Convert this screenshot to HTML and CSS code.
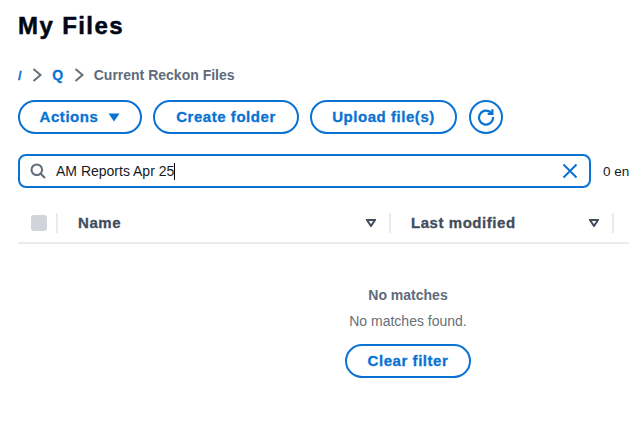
FILE: index.html
```html
<!DOCTYPE html>
<html lang="en">
<head>
    <meta charset="UTF-8">
    <title>My Files</title>
    <link rel="stylesheet" href="styles.css">
</head>
<body>
    <h1 class="page-title">My Files</h1>

    <!-- Breadcrumbs -->
    <nav class="breadcrumbs">
        <a class="crumb-link crumb-root">/</a>
        <svg class="crumb-arrow" viewBox="0 0 12 16"><path d="M2.5 2 L9.5 8 L2.5 14"/></svg>
        <a class="crumb-link">Q</a>
        <svg class="crumb-arrow" viewBox="0 0 12 16"><path d="M2.5 2 L9.5 8 L2.5 14"/></svg>
        <span class="crumb-current">Current Reckon Files</span>
    </nav>

    <!-- Toolbar -->
    <div class="toolbar">
        <button class="button button-actions">Actions
            <svg class="caret" viewBox="0 0 12 9"><path d="M0.5 0.5 H11.5 L6 8.5 Z"/></svg>
        </button>
        <button class="button button-create">Create folder</button>
        <button class="button button-upload">Upload file(s)</button>
        <button class="button-round" aria-label="Refresh">
            <svg viewBox="0 0 18 18"><path d="M14.6 5.4 A7 7 0 1 0 16 9"/><path d="M15.4 1.2 V5.9 H10.7"/></svg>
        </button>
    </div>

    <!-- Filter -->
    <div class="filter-row">
        <div class="filter-box">
            <svg class="search-icon" viewBox="0 0 16 16"><circle cx="6.8" cy="6.8" r="5.3"/><path d="M10.7 10.7 L15 15"/></svg>
            <span class="filter-text">AM Reports Apr 25</span><span class="text-cursor"></span>
            <svg class="clear-icon" viewBox="0 0 16 16"><path d="M1.5 1.5 L14.5 14.5 M14.5 1.5 L1.5 14.5"/></svg>
        </div>
        <span class="match-count">0 en</span>
    </div>

    <!-- Table header -->
    <div class="table-header">
        <div class="col-check"><span class="checkbox"></span></div>
        <div class="col col-name">
            <span>Name</span>
            <svg class="sort-icon" viewBox="0 0 10 8"><path d="M1 1 H9 L5 7 Z"/></svg>
        </div>
        <div class="col col-modified">
            <span>Last modified</span>
            <svg class="sort-icon" viewBox="0 0 10 8"><path d="M1 1 H9 L5 7 Z"/></svg>
        </div>
    </div>

    <!-- Empty state -->
    <div class="empty-state">
        <div class="empty-title">No matches</div>
        <div class="empty-text">No matches found.</div>
        <button class="button button-clear">Clear filter</button>
    </div>
</body>
</html>
```

FILE: styles.css
```css
/* General Reset and Basic Styles */
* {
    margin: 0;
    padding: 0;
    box-sizing: border-box;
}

html, body {
    overflow: hidden;
}

body {
    font-family: "Liberation Sans", Arial, sans-serif;
    background-color: #fff;
    width: 629px;
    height: 423px;
    padding: 12px 0 0 18px;
    color: #414d5c;
}

.page-title {
    font-size: 24px;
    line-height: 28px;
    font-weight: bold;
    letter-spacing: 1.4px;
    color: #000716;
    -webkit-text-stroke: 0.5px #000716;
}

/* Breadcrumbs */
.breadcrumbs {
    display: flex;
    align-items: center;
    height: 20px;
    margin-top: 25px;
    font-size: 14px;
}

.crumb-link {
    color: #0972d3;
    font-weight: bold;
    letter-spacing: 0.6px;
    -webkit-text-stroke: 0.3px #0972d3;
}

.crumb-root {
    font-size: 13px;
}

.crumb-arrow {
    width: 12px;
    height: 16px;
    margin: 0 9px;
    fill: none;
    stroke: #687078;
    stroke-width: 2;
}

.crumb-current {
    font-size: 14px;
    font-weight: bold;
    color: #5f6b7a;
}

/* Toolbar */
.toolbar {
    display: flex;
    align-items: center;
    gap: 11px;
    margin-top: 15px;
}

.button {
    height: 34px;
    padding-bottom: 2px;
    border: 2px solid #0972d3;
    border-radius: 17px;
    background-color: #fff;
    color: #0972d3;
    font-family: inherit;
    font-size: 15px;
    font-weight: bold;
    letter-spacing: 0.55px;
    -webkit-text-stroke: 0.3px #0972d3;
    display: flex;
    align-items: center;
    justify-content: center;
}

.button-actions {
    width: 124px;
    gap: 10px;
}

.button-create {
    width: 146px;
}

.button-upload {
    width: 147px;
}

.caret {
    width: 12px;
    height: 9px;
    margin-top: 2px;
    fill: #0972d3;
}

.button-round {
    width: 34px;
    height: 34px;
    margin-left: 1px;
    border: 2px solid #0972d3;
    border-radius: 50%;
    background-color: #fff;
    display: flex;
    align-items: center;
    justify-content: center;
}

.button-round svg {
    width: 18px;
    height: 18px;
    fill: none;
    stroke: #0972d3;
    stroke-width: 2.2;
}

/* Filter */
.filter-row {
    display: flex;
    align-items: center;
    margin-top: 20px;
}

.filter-box {
    width: 573px;
    height: 34px;
    flex-shrink: 0;
    border: 2px solid #0972d3;
    border-radius: 8px;
    display: flex;
    align-items: center;
    padding: 0 11px 0 10px;
}

.search-icon {
    width: 16px;
    height: 16px;
    fill: none;
    stroke: #5f6b7a;
    stroke-width: 2;
}

.filter-text {
    margin-left: 10px;
    font-size: 14px;
    color: #16191f;
}

.text-cursor {
    width: 1px;
    height: 17px;
    background-color: #000;
}

.clear-icon {
    width: 16px;
    height: 16px;
    margin-left: auto;
    fill: none;
    stroke: #0972d3;
    stroke-width: 2;
}

.match-count {
    margin-left: 12px;
    font-size: 13.5px;
    white-space: nowrap;
    color: #16191f;
}

/* Table header */
.table-header {
    display: flex;
    align-items: center;
    height: 40px;
    margin-top: 16px;
    width: 611px;
    border-bottom: 2px solid #e9ebed;
    font-size: 15px;
    font-weight: bold;
    letter-spacing: 0.55px;
    -webkit-text-stroke: 0.3px #414d5c;
}

.col-check {
    width: 40px;
    height: 20px;
    padding-left: 13px;
    border-right: 2px solid #e9ebed;
    display: flex;
    align-items: center;
}

.checkbox {
    width: 16px;
    height: 16px;
    border-radius: 3px;
    background-color: #d1d5db;
}

.col {
    height: 20px;
    display: flex;
    align-items: center;
    justify-content: space-between;
    border-right: 2px solid #e9ebed;
}

.col span {
    margin-top: -2px;
}

.col-name {
    width: 333px;
    padding: 0 13px 0 20px;
}

.col-modified {
    width: 223px;
    padding: 0 13px 0 20px;
}

.sort-icon {
    width: 10px;
    height: 8px;
    fill: none;
    stroke: #414d5c;
    stroke-width: 2;
}

/* Empty state */
.empty-state {
    width: 611px;
    padding-left: 169px;
    margin-top: 41px;
    display: flex;
    flex-direction: column;
    align-items: center;
}

.empty-title {
    font-size: 14px;
    line-height: 20px;
    font-weight: bold;
    color: #5f6b7a;
}

.empty-text {
    font-size: 14px;
    line-height: 20px;
    margin-top: 6px;
    color: #687078;
}

.button-clear {
    width: 126px;
    margin-top: 13px;
}
```
